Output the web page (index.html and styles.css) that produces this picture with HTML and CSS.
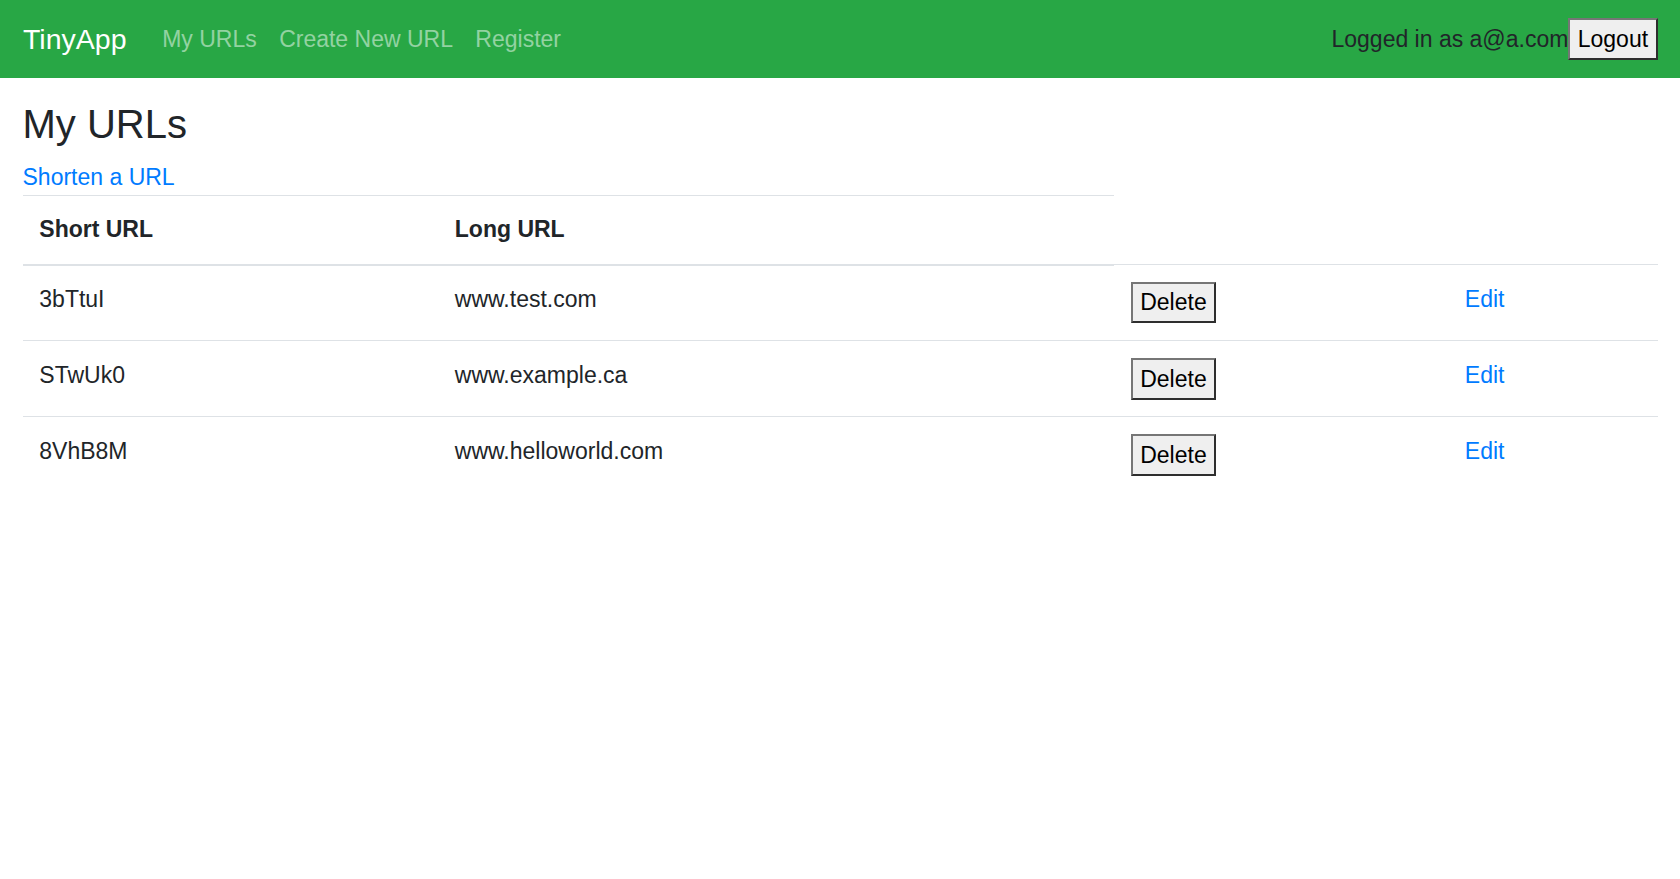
FILE: index.html
```html
<!DOCTYPE html>
<html lang="en">
<head>
<meta charset="utf-8">
<title>TinyApp</title>
<link rel="stylesheet" href="styles.css">
</head>
<body>
<nav class="navbar">
  <a class="brand" href="#">TinyApp</a>
  <ul class="nav-links">
    <li><a class="nav-link" href="#">My URLs</a></li>
    <li><a class="nav-link" href="#">Create New URL</a></li>
    <li><a class="nav-link" href="#">Register</a></li>
  </ul>
  <div class="user">
    <span class="user-text">Logged in as a@a.com</span>
    <form class="inline-form"><button type="button" class="btn">Logout</button></form>
  </div>
</nav>
<main class="container">
  <h1 class="title">My URLs</h1>
  <div class="shorten-row"><a class="link" href="#">Shorten a URL</a></div>
  <table class="table">
    <colgroup>
      <col class="col-short">
      <col class="col-long">
      <col class="col-del">
      <col class="col-edit">
    </colgroup>
    <thead>
      <tr>
        <th>Short URL</th>
        <th>Long URL</th>
      </tr>
    </thead>
    <tbody>
      <tr>
        <td>3bTtuI</td>
        <td>www.test.com</td>
        <td><form class="cell-form"><button type="button" class="btn">Delete</button></form></td>
        <td><a class="link" href="#">Edit</a></td>
      </tr>
      <tr>
        <td>STwUk0</td>
        <td>www.example.ca</td>
        <td><form class="cell-form"><button type="button" class="btn">Delete</button></form></td>
        <td><a class="link" href="#">Edit</a></td>
      </tr>
      <tr>
        <td>8VhB8M</td>
        <td>www.helloworld.com</td>
        <td><form class="cell-form"><button type="button" class="btn">Delete</button></form></td>
        <td><a class="link" href="#">Edit</a></td>
      </tr>
    </tbody>
  </table>
</main>
</body>
</html>
```

FILE: styles.css
```css
* { box-sizing: border-box; }

html, body {
  margin: 0;
  padding: 0;
}

body {
  font-family: "Liberation Sans", Arial, Helvetica, sans-serif;
  font-size: 23px;
  line-height: 1.5;
  color: #212529;
  background: #fff;
}

a { text-decoration: none; }

/* Navbar */
.navbar {
  display: flex;
  align-items: center;
  background: #28a745;
  padding: 0 22.5px 0 23px;
  height: 78px;
}

.brand {
  color: #fff;
  font-size: 28.5px;
  line-height: 1.5;
  padding: 4.4px 0;
  margin-right: 24.5px;
  white-space: nowrap;
}

.nav-links {
  display: flex;
  list-style: none;
  margin: 0;
  padding: 0;
}

.nav-link {
  display: block;
  padding: 11.2px;
  color: rgba(255, 255, 255, 0.5);
  white-space: nowrap;
}

.user {
  margin-left: auto;
  display: flex;
  align-items: center;
}

.user-text {
  color: #212529;
  white-space: nowrap;
}

.inline-form { margin: 0; display: inline-block; }

.btn {
  font-family: inherit;
  font-size: 23px;
  line-height: 1.5;
  color: #000;
  background: #efefef;
  margin: 0;
  padding: 1.5px 7.4px;
  border-width: 2px;
  border-style: solid;
  border-color: #767676 #2e2e2e #2e2e2e #767676;
  border-radius: 0;
  cursor: pointer;
}

/* Content */
.container {
  padding: 0 22.5px;
}

.title {
  font-size: 40px;
  font-weight: 500;
  line-height: 1.2;
  margin: 22.4px 0 11.7px;
}

.link { color: #007bff; }

.shorten-row { line-height: 1.5; }

.table {
  width: 100%;
  border-collapse: collapse;
  table-layout: fixed;
  color: #212529;
}

.col-short { width: 415.5px; }
.col-long { width: 676px; }
.col-del { width: 334px; }
.col-edit { width: 209.5px; }

.table th,
.table td {
  padding: 16.8px;
  text-align: left;
  border-top: 1px solid #dee2e6;
}

.table th {
  font-weight: 700;
  vertical-align: bottom;
  border-bottom: 2px solid #dee2e6;
}

.table td {
  vertical-align: top;
}

.cell-form { margin: 0; }
```
